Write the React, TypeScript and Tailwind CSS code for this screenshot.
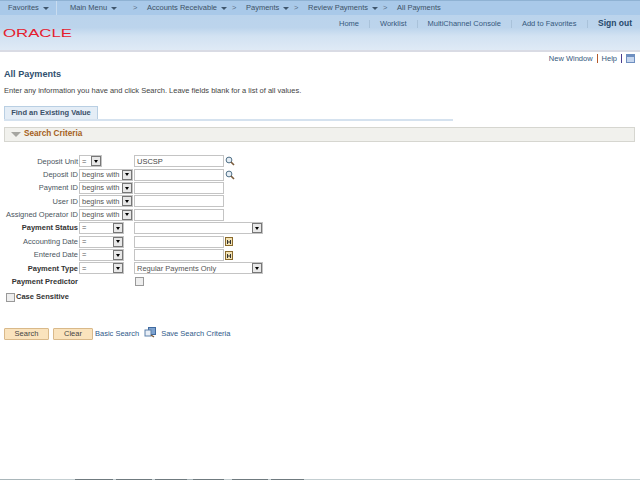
import { Fragment } from "react";

const crumbs = [
  { label: "Accounts Receivable", w: "w-[85px]" },
  { label: "Payments", w: "w-[48px]" },
  { label: "Review Payments", w: "w-[75px]" },
];

const topLinks = ["Home", "Worklist", "MultiChannel Console", "Add to Favorites"];

const footerSegments = [
  "w-[40px] bg-[#a9b6ba]", "w-[35px] bg-[#c3ced1]", "w-[38px] bg-[#6f7a7f]", "w-[3px] bg-[#c3ced1]",
  "w-[36px] bg-[#6f7a7f]", "w-[3px] bg-[#c3ced1]", "w-[32px] bg-[#6f7a7f]", "w-[6px] bg-[#a9b6ba]",
  "w-[31px] bg-[#6f7a7f]", "w-[8px] bg-[#c3ced1]", "w-[36px] bg-[#6f7a7f]", "w-[3px] bg-[#c3ced1]",
  "w-[33px] bg-[#6f7a7f]", "flex-1 bg-[#c3ced1]",
];

function Caret() {
  return <span className="ml-[4px] inline-block h-0 w-0 border-x-[3px] border-t-[3px] border-x-transparent border-t-[#3f566d]" />;
}

function Select({ value, width }: { value: string; width: string }) {
  return (
    <div className={`flex h-[12px] items-center justify-between border border-[#c4c4c4] bg-white pl-[2px] ${width}`}>
      <span className="text-[#555]">{value}</span>
      <span className="flex h-[10px] w-[10px] items-center justify-center border border-[#777] bg-[#e8e8e8]">
        <span className="h-0 w-0 border-x-[2.5px] border-t-[3px] border-x-transparent border-t-black" />
      </span>
    </div>
  );
}

function Lookup() {
  return (
    <svg className="ml-[1px]" width="10" height="10" viewBox="0 0 10 10" fill="none">
      <circle cx="4" cy="4" r="2.9" fill="#e6eef5" stroke="#4f6f86" strokeWidth="1" />
      <path d="M6 6 L9 9" stroke="#7a5a3a" strokeWidth="1.6" />
    </svg>
  );
}

function Calendar() {
  return (
    <svg className="ml-[1px]" width="8" height="9" viewBox="0 0 8 9">
      <rect x="0.5" y="0.5" width="7" height="8" fill="#f3e3b4" stroke="#8a6a2c" />
      <path d="M2.5 3v4M5.5 3v4M2.5 5h3" stroke="#333" strokeWidth="1" />
    </svg>
  );
}

function Row({ label, bold, op, opWidth, children }: { label: string; bold?: boolean; op?: string; opWidth?: string; children?: React.ReactNode }) {
  return (
    <div className="flex h-[13.4px] items-center">
      <div className={`w-[79px] shrink-0 pr-px text-right ${bold ? "font-bold text-[#333]" : "text-[#4a5560]"}`}>{label}</div>
      <div className="w-[55px] shrink-0">{op && <Select value={op} width={opWidth ?? "w-[54px]"} />}</div>
      <div className="flex items-center">{children}</div>
    </div>
  );
}

function TextInput({ value }: { value?: string }) {
  return <div className="flex h-[12px] w-[90px] items-center border border-[#c4c4c4] bg-white pl-[2px] text-[#444]">{value}</div>;
}

export default function App() {
  return (
    <div className="flex min-h-[480px] flex-col overflow-hidden whitespace-nowrap bg-white font-['Liberation_Sans',Arial,sans-serif] text-[7.5px] leading-none text-[#444]">
      <header className="h-[52px] border-b-2 border-[#d9dbe4] bg-[linear-gradient(#b9d3ec_0%,#bcd4ec_55%,#d2e2f2_72%,#dfeaf6_100%)]">
        <nav className="flex h-[15px] items-center border-t border-[#8fb2d3] bg-[#a9c9e9] text-[#3d5166]">
          <div className="flex h-full w-[57px] items-center border-r border-[#c9dcef] pl-[8px]">Favorites<Caret /></div>
          <div className="flex w-[76px] items-center pl-[13px]">Main Menu<Caret /></div>
          <span className="w-[14px] text-[#5a7088]">&gt;</span>
          {crumbs.map((c) => (
            <Fragment key={c.label}>
              <span className={`flex items-center ${c.w}`}>{c.label}<Caret /></span>
              <span className="w-[14px] text-[#5a7088]">&gt;</span>
            </Fragment>
          ))}
          <span>All Payments</span>
        </nav>
        <div className="flex h-[35px]">
          <div className="pl-[3px] pt-[12px]">
            <svg width="70" height="11" viewBox="0 0 70 11">
              <text x="0" y="9.5" textLength="69" lengthAdjust="spacingAndGlyphs" fontSize="11" fontFamily="Liberation Sans" fill="#e5202e">ORACLE</text>
            </svg>
          </div>
          <div className="ml-auto flex h-[14px] items-center pt-[3px] text-[#35587c]">
            {topLinks.map((l) => (
              <span key={l} className="flex h-[8px] items-center border-r border-[#a9c2da] px-[10px]">{l}</span>
            ))}
            <span className="pl-[10.5px] pr-[8px] text-[8.5px] font-bold text-[#26486b]">Sign out</span>
          </div>
        </div>
      </header>

      <div className="flex h-[11px] items-center justify-end pr-[5px] pt-[2px] text-[#35587c]">
        <span>New Window</span>
        <span className="mx-[4px] h-[9px] w-px bg-[#b4592a]" />
        <span>Help</span>
        <span className="mx-[4px] h-[9px] w-px bg-[#4b3d8f]" />
        <span className="flex h-[9px] w-[9px] flex-col border border-[#6f8fc0] bg-[#c6d6ee]">
          <span className="h-[2px] bg-[#6f8fc0]" />
        </span>
      </div>

      <main className="flex flex-col px-[4px]">
        <h1 className="mt-[7px] text-[9.1px] font-bold text-[#2f4f6e]">All Payments</h1>
        <p className="mt-[8px] text-[#444]">Enter any information you have and click Search. Leave fields blank for a list of all values.</p>

        <div className="mt-[11px] w-[449px] border-b-2 border-[#d5e2ef]">
          <div className="flex h-[13px] w-[94px] items-center justify-center border-x border-t border-[#b9cfe3] bg-[#e4edf6] font-bold text-[#3a5068]">Find an Existing Value</div>
        </div>

        <div className="mt-[6px] flex h-[15px] w-[631px] items-center border border-[#d6d6d0] bg-[#f1f1ed] pl-[6px]">
          <span className="h-0 w-0 border-x-[5px] border-t-[5px] border-x-transparent border-t-[#a5a5a0]" />
          <span className="ml-[2px] pl-[1px] text-[8.2px] font-bold text-[#a5601a]">Search Criteria</span>
        </div>

        <div className="-ml-[4px] mt-[13px] flex flex-col">
          <Row label="Deposit Unit" op="=" opWidth="w-[23px]"><TextInput value="USCSP" /><Lookup /></Row>
          <Row label="Deposit ID" op="begins with"><TextInput /><Lookup /></Row>
          <Row label="Payment ID" op="begins with"><TextInput /></Row>
          <Row label="User ID" op="begins with"><TextInput /></Row>
          <Row label="Assigned Operator ID" op="begins with"><TextInput /></Row>
          <Row label="Payment Status" bold op="=" opWidth="w-[45px]"><Select value="" width="w-[129px]" /></Row>
          <Row label="Accounting Date" op="=" opWidth="w-[45px]"><TextInput /><Calendar /></Row>
          <Row label="Entered Date" op="=" opWidth="w-[45px]"><TextInput /><Calendar /></Row>
          <Row label="Payment Type" bold op="=" opWidth="w-[45px]"><Select value="Regular Payments Only" width="w-[129px]" /></Row>
          <Row label="Payment Predictor" bold>
            <span className="ml-px h-[9px] w-[9px] border border-[#999] bg-[#eee]" />
          </Row>
        </div>

        <div className="ml-[2px] mt-[4px] flex items-center">
          <span className="h-[9px] w-[9px] border border-[#999] bg-[#eee]" />
          <span className="ml-[1px] font-bold text-[#333]">Case Sensitive</span>
        </div>

        <div className="mt-[25px] flex items-center text-[#2f5a8a]">
          <button className="h-[12px] w-[45px] rounded-[1px] border border-[#d9b98a] bg-[#fae3bd] text-[#444]">Search</button>
          <button className="ml-[4px] h-[12px] w-[40px] rounded-[1px] border border-[#d9b98a] bg-[#fae3bd] text-[#444]">Clear</button>
          <span className="ml-[2px]">Basic Search</span>
          <svg className="mb-[3px] ml-[5px]" width="12" height="11" viewBox="0 0 12 11">
            <rect x="4.5" y="0.5" width="7" height="7" fill="#7fa3cf" stroke="#3f6aa0" />
            <rect x="1" y="3" width="6" height="6" fill="#e8eef6" stroke="#5d80aa" />
            <path d="M7 8l3 2" stroke="#7a5a3a" strokeWidth="1.4" />
          </svg>
          <span className="ml-[5px]">Save Search Criteria</span>
        </div>
      </main>

      <div className="mt-auto flex h-px w-full">
        {footerSegments.map((s, i) => (
          <span key={i} className={s} />
        ))}
      </div>
    </div>
  );
}
